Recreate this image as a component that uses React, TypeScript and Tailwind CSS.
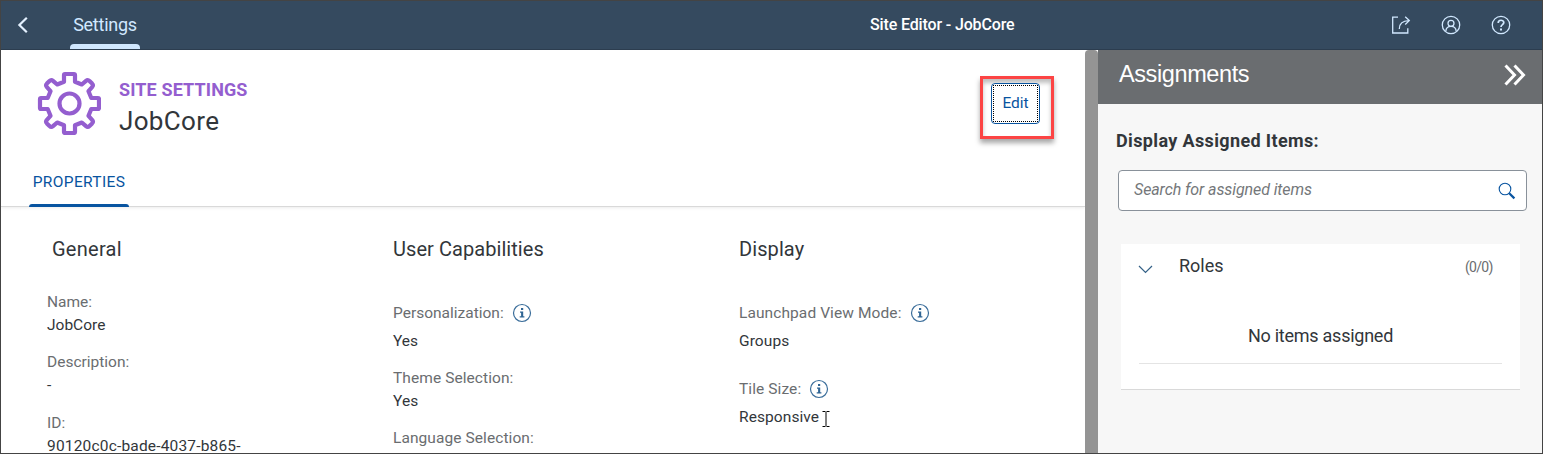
import React from "react";

const InfoIcon = () => (
  <svg width="20" height="20" viewBox="0 0 20 20" fill="none" className="shrink-0">
    <circle cx="10" cy="10" r="8.5" stroke="#3a6d9a" strokeWidth="1.2" />
    <path d="M9 5h2.2v2H9zM8 8.6h3.2v4.7h1.2v1.2H7.7v-1.2h1.4V9.8H8z" fill="#2f6594" />
  </svg>
);

const GearIcon = () => (
  <svg width="64" height="64" viewBox="-32.5 -32.5 64 64" fill="none" stroke="#945ecf" strokeWidth="4.2" strokeLinejoin="round" className="shrink-0">
    <path d="M-4.5 -29.5H4.5Q5.5 -29.5 5.5 -28.5V-21.8L12.3 -19L16.5 -22.7Q18.3 -24.2 20 -22.5L22.6 -19.9Q24.2 -18.2 22.6 -16.4L19 -12.3L21.8 -5.5H28.5Q29.5 -5.5 29.5 -4.5V4.5Q29.5 5.5 28.5 5.5H21.8L19 12.3L22.6 16.4Q24.2 18.2 22.6 19.9L20 22.5Q18.3 24.2 16.5 22.7L12.3 19L5.5 21.8V28.5Q5.5 29.5 4.5 29.5H-4.5Q-5.5 29.5 -5.5 28.5V21.8L-12.3 19L-16.5 22.7Q-18.3 24.2 -20 22.5L-22.6 19.9Q-24.2 18.2 -22.6 16.4L-19 12.3L-21.8 5.5H-28.5Q-29.5 5.5 -29.5 4.5V-4.5Q-29.5 -5.5 -28.5 -5.5H-21.8L-19 -12.3L-22.6 -16.4Q-24.2 -18.2 -22.6 -19.9L-20 -22.5Q-18.3 -24.2 -16.5 -22.7L-12.3 -19L-5.5 -21.8V-28.5Q-5.5 -29.5 -4.5 -29.5Z" />
    <circle r="10" />
  </svg>
);

const Label = ({ children, info }: { children: React.ReactNode; info?: boolean }) => (
  <div className="flex h-5 items-center gap-2 text-[#6a6d70]">
    <span>{children}</span>
    {info && <InfoIcon />}
  </div>
);

export default function App() {
  return (
    <div className="flex h-[454px] w-[1543px] flex-col overflow-hidden border border-[#444] bg-white font-['Roboto',sans-serif] text-[15.5px] leading-5 whitespace-nowrap text-[#32363a]">
      <header className="flex h-[49px] shrink-0 border-b border-[#2c3d4f] bg-[#354a5f]">
        <div className="flex w-[69px] items-center pl-4">
          <svg width="12" height="18" viewBox="0 0 12 18" fill="none" stroke="#e4f1ff" strokeWidth="2.2">
            <path d="M9.8 1.8L2.4 9L9.8 16.2" />
          </svg>
        </div>
        <div className="flex w-[70px] flex-col items-center justify-between">
          <span className="mt-3 text-[18px] leading-6 tracking-[-0.25px] text-[#d1e8ff]">Settings</span>
          <span className="h-[5px] w-full rounded-t-sm bg-[#d1e8ff]" />
        </div>
        <div className="ml-[730px] w-[521px] pt-[13px] text-[16px] leading-[22px] font-medium tracking-[-0.14px] text-white">Site Editor - JobCore</div>
        <div className="flex items-center gap-[30px] text-[#d1e8ff]">
          <svg width="20" height="20" viewBox="0 0 20 20" fill="none" stroke="currentColor" strokeWidth="1.3">
            <path d="M7 2.2H1.7V18H16.8V13.2M8.3 14C8.2 8.7 11.4 5.8 18 5.6M14.2 1.7L18.3 5.6L14.2 9.5" />
          </svg>
          <svg width="20" height="20" viewBox="0 0 20 20" fill="none" stroke="currentColor" strokeWidth="1.3">
            <circle cx="10" cy="10" r="8.7" />
            <circle cx="10" cy="8.3" r="3" />
            <path d="M4.8 16.3C5 13 7 11.4 10 11.4S15 13 15.2 16.3" />
          </svg>
          <svg width="20" height="20" viewBox="0 0 20 20" fill="none" stroke="currentColor" strokeWidth="1.3">
            <circle cx="10" cy="10" r="8.7" />
            <path d="M7.2 8C7.2 4.3 12.8 4.5 12.8 7.6C12.8 9.7 10 9.5 10 12" strokeWidth="1.7" />
            <path d="M9 13.4h2v2H9z" fill="currentColor" stroke="none" />
          </svg>
        </div>
      </header>

      <div className="flex min-h-0 flex-1">
        <main className="flex w-[1084px] shrink-0 flex-col overflow-hidden">
          <section className="flex h-[157px] shrink-0 flex-col justify-between border-b border-[#d9d9d9] shadow-[0_1px_3px_rgba(0,0,0,0.08)]">
            <div className="flex pt-[21px] pl-9">
              <GearIcon />
              <div className="ml-[18px] w-[861px] pt-2">
                <div className="text-[18px] leading-[22px] font-bold tracking-[0.12px] text-[#945ecf]">SITE SETTINGS</div>
                <div className="mt-1 text-[26px] leading-8 tracking-[0.35px]">JobCore</div>
              </div>
              <div className="mt-[5px] flex h-[63px] w-[74px] items-start border-[3px] border-[#fc4444] pt-1 pl-2 shadow-[0_4px_5px_rgba(0,0,0,0.35),inset_0_4px_4px_rgba(0,0,0,0.25)]">
                <button className="h-[41px] w-[49px] rounded border border-[#0854a0] bg-white p-px text-[15.5px] text-[#0854a0]">
                  <span className="flex h-full items-center justify-center border border-dotted border-black pb-px">Edit</span>
                </button>
              </div>
            </div>
            <div className="ml-7 flex h-[34px] w-[100px] flex-col justify-between text-[#0854a0]">
              <span className="text-center tracking-[0.35px]">PROPERTIES</span>
              <span className="-mb-px h-[3px] rounded-t-sm bg-[#0854a0]" />
            </div>
          </section>

          <div className="flex pt-[30px] pl-[46px]">
            <section className="w-[346px]">
              <h2 className="ml-[5px] text-[20px] leading-6 tracking-[0.25px]">General</h2>
              <div className="mt-[31px]">
                <Label>Name:</Label>
                <div className="mt-[3px]">JobCore</div>
              </div>
              <div className="mt-[17px]">
                <Label>Description:</Label>
                <div className="mt-[3px]">-</div>
              </div>
              <div className="mt-[18px]">
                <Label>ID:</Label>
                <div className="mt-[3px] tracking-[0.18px]">90120c0c-bade-4037-b865-</div>
              </div>
            </section>
            <section className="w-[346px]">
              <h2 className="text-[20px] leading-6 tracking-[0.06px]">User Capabilities</h2>
              <div className="mt-[42px]">
                <Label info>Personalization:</Label>
                <div className="mt-2">Yes</div>
              </div>
              <div className="mt-[17px] tracking-[0.08px]">
                <Label>Theme Selection:</Label>
                <div className="mt-[3px]">Yes</div>
              </div>
              <div className="mt-[17px] tracking-[0.08px]">
                <Label>Language Selection:</Label>
              </div>
            </section>
            <section className="w-[346px] tracking-[0.09px]">
              <h2 className="text-[20px] leading-6">Display</h2>
              <div className="mt-[42px]">
                <Label info>Launchpad View Mode:</Label>
                <div className="mt-2">Groups</div>
              </div>
              <div className="mt-[28px]">
                <Label info>Tile Size:</Label>
                <div className="mt-2 flex gap-[3px]">
                  <span>Responsive</span>
                  <svg width="8" height="18" viewBox="0 0 8 18" fill="none" stroke="#000" className="mt-[3px]">
                    <path d="M0.5 1.5H3.5M4.5 1.5H7.5M4 2V16M0.5 16.5H3.5M4.5 16.5H7.5" />
                  </svg>
                </div>
              </div>
            </section>
          </div>
        </main>

        <div className="w-[13px] shrink-0 rounded-t bg-[#949494]" />

        <aside className="flex flex-1 flex-col bg-[#f7f7f7]">
          <div className="flex h-[54px] shrink-0 items-start justify-between bg-[#6a6d70] pr-4 pl-[21px] text-white">
            <h2 className="pt-[9px] font-['Liberation_Sans',sans-serif] text-[23.5px] leading-[30px] tracking-[-0.4px]">Assignments</h2>
            <svg width="22" height="22" viewBox="0 0 22 22" fill="none" stroke="#fff" strokeWidth="3" className="mt-[14px]">
              <path d="M1.5 1.5L10.5 11L1.5 20.5M10.5 1.5L19.5 11L10.5 20.5" />
            </svg>
          </div>
          <div className="mt-[25px] ml-[18px] text-[18px] leading-6 font-bold tracking-[0.36px]">Display Assigned Items:</div>
          <div className="mt-[17px] ml-5 flex h-[41px] w-[409px] items-center justify-between rounded-sm border border-[#89919a] bg-white pr-[10px] pl-[15px] text-[16px] text-[#74777a] italic">
            <span className="pb-px tracking-[-0.09px]">Search for assigned items</span>
            <svg width="18" height="18" viewBox="0 0 18 18" fill="none" stroke="#0854a0">
              <circle cx="7" cy="7" r="5.8" strokeWidth="1.1" />
              <path d="M11.2 11.2L16.4 16.4" strokeWidth="2.2" />
            </svg>
          </div>
          <section className="mt-[33px] ml-[23px] h-[146px] w-[399px] border-b border-[#d9d9d9] bg-white">
            <div className="flex pt-[10px] pl-[17px]">
              <svg width="15" height="9" viewBox="0 0 15 9" fill="none" stroke="#346187" strokeWidth="1.2" className="mt-[11px]">
                <path d="M1 1L7.5 7.5L14 1" />
              </svg>
              <span className="ml-[26px] w-[286px] text-[18px] leading-6">Roles</span>
              <span className="pt-[3px] text-[14px] tracking-[-0.7px] text-[#6a6d70]">(0/0)</span>
            </div>
            <div className="mx-[18px] mt-[46px] h-[40px] border-b border-[#e4e4e4] text-center text-[18px] leading-6 tracking-[-0.25px]">No items assigned</div>
          </section>
        </aside>
      </div>
    </div>
  );
}
